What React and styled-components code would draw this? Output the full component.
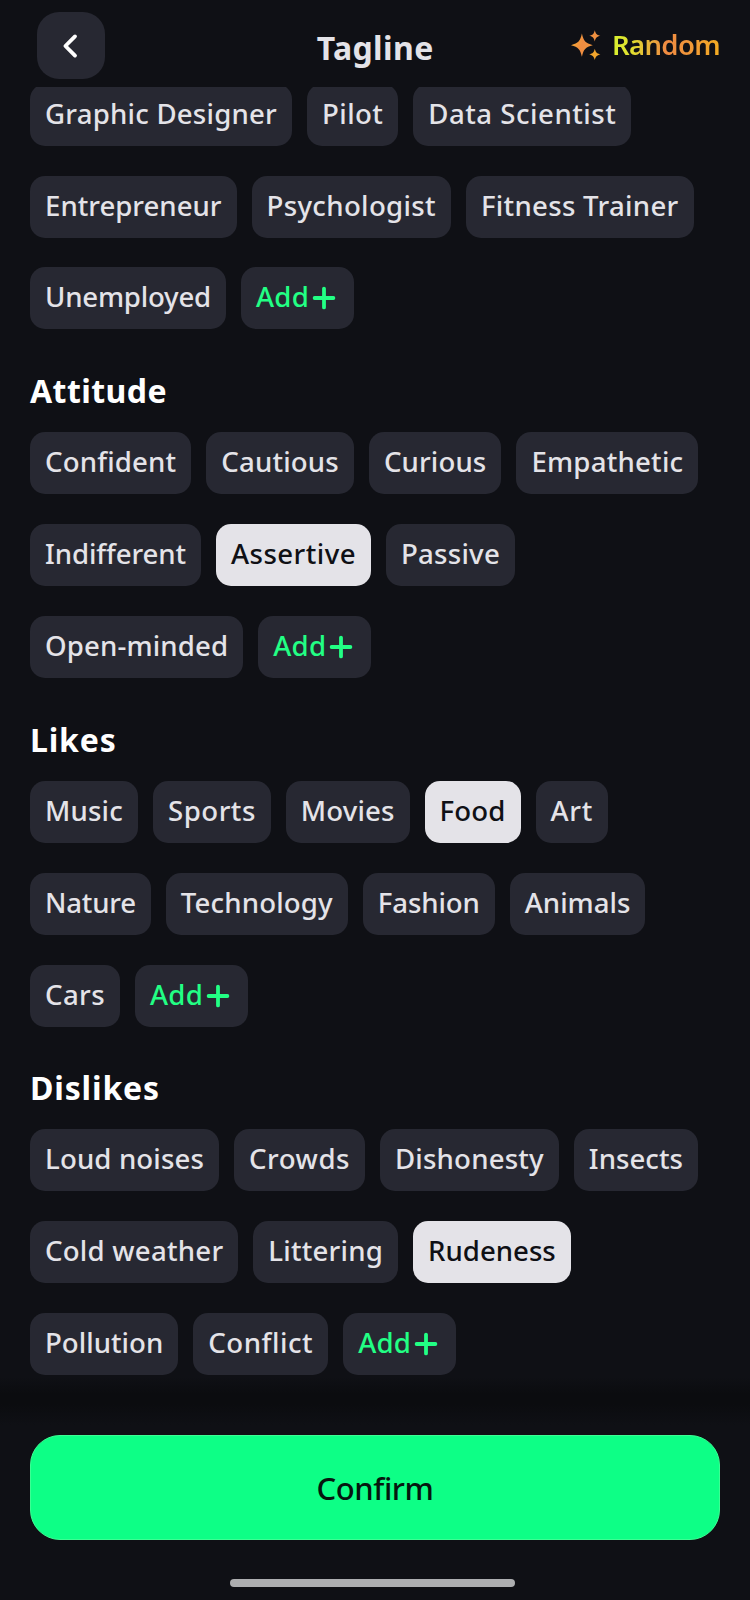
import React, { useLayoutEffect, useRef } from "react";
import styled, { createGlobalStyle } from "styled-components";

const GlobalStyle = createGlobalStyle`
  * { box-sizing: border-box; }
  body {
    margin: 0;
    background: #0f1015;
    color: #e4e3e8;
    font-family: "Noto Sans", "Open Sans", sans-serif;
  }
  button, h1, h2 { margin: 0; padding: 0; border: 0; font: inherit; color: inherit; background: none; }
`;

const Screen = styled.main`
  width: 750px;
  height: 1600px;
  display: flex;
  flex-direction: column;
  overflow: hidden;
  background: #0f1015;
`;

const Header = styled.header`
  flex: none;
  height: 87px;
  padding: 12px 30px 0 37.3px;
  display: grid;
  grid-template-columns: 1fr auto 1fr;
  align-items: start;
`;

const BackButton = styled.button`
  width: 67.5px;
  height: 67px;
  border-radius: 22px;
  background: #272832;
  display: grid;
  place-items: center;
`;

const Title = styled.h1`
  padding-top: 12px;
  padding-right: 7px;
  font-size: 32px;
  line-height: 48px;
  font-weight: 750;
`;

const RandomButton = styled.button`
  justify-self: end;
  margin-top: 8px;
  display: flex;
  align-items: center;
  gap: 11px;
  font-size: 27.5px;
  line-height: 50px;
  font-weight: 560;
  svg { margin-top: -1px; }
`;

const GradientLabel = styled.span`
  display: block;
  background: linear-gradient(90deg, #d9f22f 0%, #e0de30 18%, #ef8a42 50%, #f0963a 70%, #f3ac22 100%);
  background-clip: text;
  color: transparent;
`;

const Content = styled.div`
  flex: none;
  height: 1290px;
  overflow: hidden;
  padding: 0 30px;
`;

const SectionTitle = styled.h2`
  margin: 37.6px 0 17.2px;
  font-size: 32px;
  line-height: 48px;
  font-weight: 750;
  color: #fff;
`;

const Chips = styled.div`
  display: flex;
  flex-direction: column;
  gap: 29.9px;
  margin-top: ${(p) => (p.$scrolled ? "-3.4px" : "0")};
`;

const ChipRow = styled.div`
  display: flex;
  gap: 15px;
`;

const Chip = styled.button`
  flex: none;
  width: ${(p) => p.$w}px;
  height: 62px;
  padding: 0 15px 4px;
  border-radius: 15px;
  background: ${(p) => (p.$selected ? "#e4e3e8" : "#272832")};
  color: ${(p) => (p.$selected ? "#0f1015" : "#e4e3e8")};
  font-size: 27.6px;
  line-height: 58px;
  font-weight: 520;
  text-align: left;
`;

const AddChip = styled(Chip)`
  display: flex;
  align-items: center;
  gap: 3px;
  color: #22ff84;
  svg { margin-top: 4px; }
`;

const Footer = styled.footer`
  flex: 1;
  display: flex;
  flex-direction: column;
  align-items: center;
  padding-top: 58px;
  background: linear-gradient(#0f1015 0, #0b0c0f 17px, #0b0c0f 27px, #0f1015 48px);
`;

const ConfirmButton = styled.button`
  width: 690px;
  height: 105px;
  padding-top: 1px;
  border: 1px solid #3cff94;
  border-radius: 30px;
  background: #0dff86;
  color: #06160f;
  display: flex;
  align-items: center;
  justify-content: center;
  font-size: 31px;
  line-height: 46px;
  font-weight: 540;
`;

const HomeIndicator = styled.div`
  width: 285px;
  height: 8px;
  margin: 39px 5px 0 0;
  border-radius: 4px;
  background: #adaeb0;
`;

const LabelText = styled.span`
  display: inline-block;
  white-space: nowrap;
  font-variant-ligatures: none;
`;

// Spreads the letters so the label fills exactly the given width.
function Label({ width, children }) {
  const ref = useRef(null);
  useLayoutEffect(() => {
    const el = ref.current;
    const fit = () => {
      el.style.width = "auto";
      el.style.letterSpacing = "0px";
      const natural = el.getBoundingClientRect().width;
      el.style.letterSpacing = `${(width - natural) / children.length}px`;
      el.style.width = `${width}px`;
    };
    fit();
    document.fonts.ready.then(fit);
  }, [width, children]);
  return <LabelText ref={ref}>{children}</LabelText>;
}

const Sparkles = () => (
  <svg width="30" height="30" viewBox="0 0 30 30">
    <defs>
      <linearGradient id="spark" x1="0" y1="0" x2="1" y2="0.4">
        <stop offset="0" stopColor="#f3b02c" />
        <stop offset="0.6" stopColor="#f08c42" />
        <stop offset="1" stopColor="#f0953c" />
      </linearGradient>
    </defs>
    <path fill="url(#spark)" d="M10.9 3.6C12.7 11.3 14.3 13.2 21.8 15.2C14.3 17.2 12.7 19.1 10.9 26.8C9.1 19.1 7.5 17.2 0 15.2C7.5 13.2 9.1 11.3 10.9 3.6Z" />
    <path fill="#ef9040" d="M23.8.2C24.8 4 25.6 4.8 29.4 5.8C25.6 6.8 24.8 7.6 23.8 11.4C22.8 7.6 22 6.8 18.2 5.8C22 4.8 22.8 4 23.8.2Z" />
    <path fill="#f3a52c" d="M23.8 18.8C24.8 22.6 25.6 23.4 29.4 24.4C25.6 25.4 24.8 26.2 23.8 30C22.8 26.2 22 25.4 18.2 24.4C22 23.4 22.8 22.6 23.8 18.8Z" />
  </svg>
);

const Chevron = () => (
  <svg width="20" height="28" viewBox="0 0 20 28" fill="none" stroke="#fff" strokeWidth="3.8" strokeLinecap="round" strokeLinejoin="round">
    <path d="M14 4.4L4.4 14L14 23.6" />
  </svg>
);

const Plus = () => (
  <svg width="24" height="24" viewBox="0 0 24 24" fill="none" stroke="#22ff84" strokeWidth="3.8" strokeLinecap="round">
    <path d="M12 2.6V21.4M2.6 12H21.4" />
  </svg>
);

const sections = [
  {
    rows: [
      [["Graphic Designer", 262], ["Pilot", 91.3], ["Data Scientist", 218]],
      [["Entrepreneur", 206.5], ["Psychologist", 199.5], ["Fitness Trainer", 227.5]],
      [["Unemployed", 196], "add"],
    ],
  },
  {
    title: "Attitude",
    titleWidth: 137,
    rows: [
      [["Confident", 161.3], ["Cautious", 147.6], ["Curious", 132.5], ["Empathetic", 182]],
      [["Indifferent", 171], ["Assertive", 155, true], ["Passive", 129]],
      [["Open-minded", 213.3], "add"],
    ],
  },
  {
    title: "Likes",
    titleWidth: 86.5,
    rows: [
      [["Music", 108], ["Sports", 117.8], ["Movies", 123.8], ["Food", 96, true], ["Art", 72.3]],
      [["Nature", 120.8], ["Technology", 182], ["Fashion", 132], ["Animals", 135.5]],
      [["Cars", 90], "add"],
    ],
  },
  {
    title: "Dislikes",
    titleWidth: 130,
    rows: [
      [["Loud noises", 189], ["Crowds", 131], ["Dishonesty", 178.8], ["Insects", 124.3]],
      [["Cold weather", 208.3], ["Littering", 144.7], ["Rudeness", 157.8, true]],
      [["Pollution", 148.2], ["Conflict", 135], "add"],
    ],
  },
];

export default function App() {
  return (
    <Screen>
      <GlobalStyle />
      <Header>
        <BackButton aria-label="Back"><Chevron /></BackButton>
        <Title><Label width={117}>Tagline</Label></Title>
        <RandomButton>
          <Sparkles />
          <GradientLabel><Label width={108}>Random</Label></GradientLabel>
        </RandomButton>
      </Header>
      <Content>
        {sections.map((section, i) => (
          <section key={i}>
            {section.title && (
              <SectionTitle><Label width={section.titleWidth}>{section.title}</Label></SectionTitle>
            )}
            <Chips $scrolled={i === 0}>
              {section.rows.map((row, r) => (
                <ChipRow key={r}>
                  {row.map((chip) =>
                    chip === "add" ? (
                      <AddChip key="add" $w={113}><Label width={53}>Add</Label><Plus /></AddChip>
                    ) : (
                      <Chip key={chip[0]} $w={chip[1]} $selected={chip[2]}>
                        <Label width={chip[1] - 30}>{chip[0]}</Label>
                      </Chip>
                    )
                  )}
                </ChipRow>
              ))}
            </Chips>
          </section>
        ))}
      </Content>
      <Footer>
        <ConfirmButton><Label width={117}>Confirm</Label></ConfirmButton>
        <HomeIndicator />
      </Footer>
    </Screen>
  );
}
